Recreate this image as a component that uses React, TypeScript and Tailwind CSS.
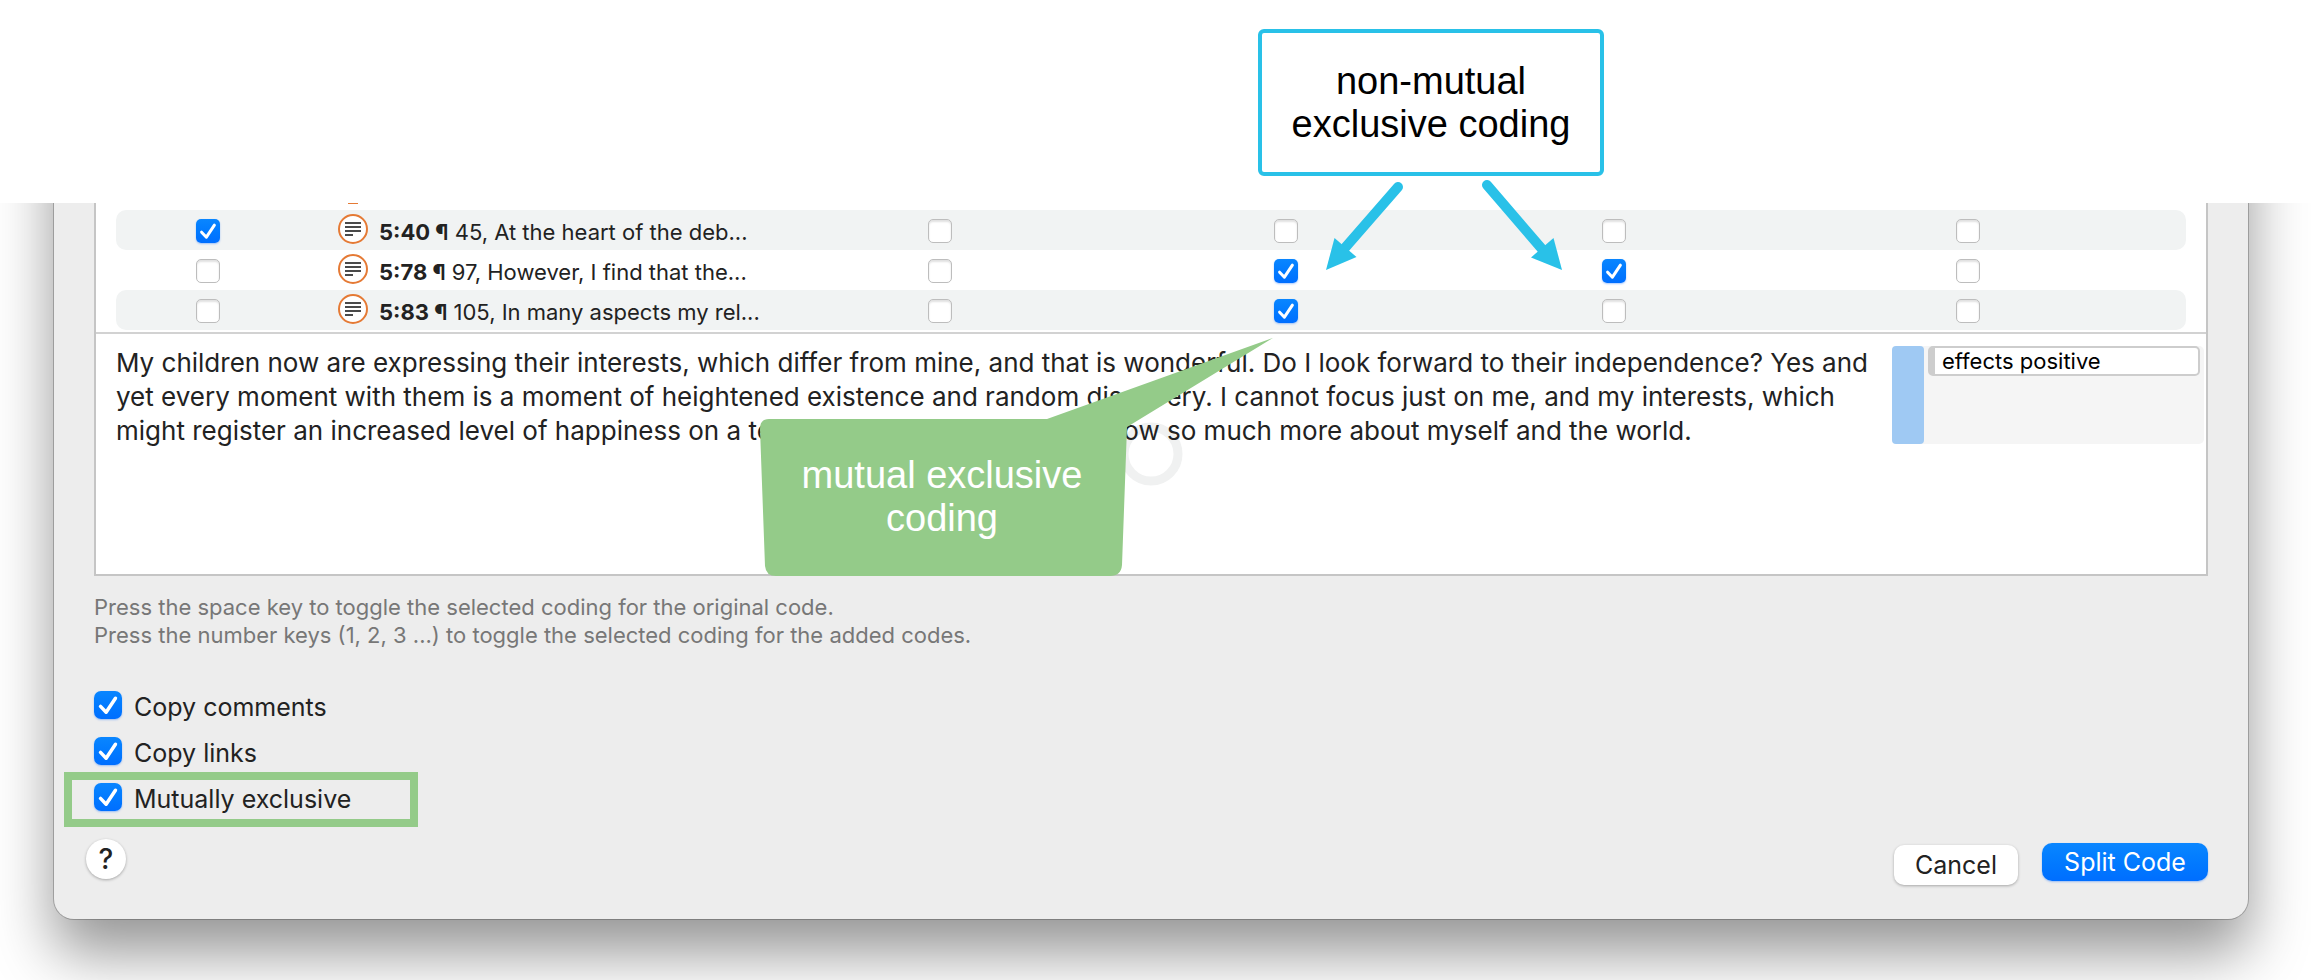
import { useState } from "react";

function CheckBox({
  label,
  id,
  large = false,
  initial = false,
}: {
  label?: string;
  id?: string;
  large?: boolean;
  initial?: boolean;
}) {
  const [on, setOn] = useState(initial);
  const size = large ? "size-7 rounded-[7px]" : "size-6 rounded-[5px]";
  const skin = on
    ? "bg-linear-to-b from-[#0a86ff] to-[#006eff] shadow-[0_1px_2px_rgba(0,100,255,0.35)]"
    : "border border-[#bdbdbd] bg-white shadow-[inset_0_2px_2px_rgba(0,0,0,0.12)]";
  return (
    <span className="inline-grid shrink-0 place-items-center align-middle">
      <input
        id={id}
        type="checkbox"
        aria-label={label}
        checked={on}
        onChange={() => setOn(!on)}
        className={`col-start-1 row-start-1 m-0 appearance-none ${size} ${skin}`}
      />
      {on && (
        <svg
          viewBox="0 0 24 24"
          className={`pointer-events-none col-start-1 row-start-1 ${large ? "size-7" : "size-6"}`}
          fill="none"
          stroke="#fff"
          strokeWidth="3"
          strokeLinecap="round"
          strokeLinejoin="round"
        >
          <path d="M5.6 13.2 10.4 18.2 18.4 6.2" />
        </svg>
      )}
    </span>
  );
}

function QuoteIcon() {
  return (
    <svg viewBox="0 0 30 30" className="size-[30px] shrink-0">
      <circle cx="15" cy="15" r="14" fill="#fff" stroke="#e57a35" strokeWidth="2" />
      <path d="M7 9h16M7 13h16M7 17h16M7 21h8" stroke="#4a4a4a" strokeWidth="2" />
    </svg>
  );
}

const rows = [
  { id: "5:40", text: "45, At the heart of the deb...", marks: [true, false, false, false, false] },
  { id: "5:78", text: "97, However, I find that the...", marks: [false, false, true, true, false] },
  { id: "5:83", text: "105, In many aspects my rel...", marks: [false, false, true, false, false] },
];

function QuotationTable() {
  return (
    <div className="px-5 pb-0.5">
      <table className="w-full table-fixed border-separate border-spacing-0">
        <colgroup>
          <col className="w-[183px]" />
          <col className="w-[487px]" />
          <col className="w-[308px]" />
          <col className="w-[384px]" />
          <col className="w-[272px]" />
          <col className="w-[436px]" />
        </colgroup>
        <tbody>
          <tr>
            <td className="p-0" />
            <td className="p-0 pl-[39px]" colSpan={5}>
              <svg viewBox="0 0 30 7" className="block h-[7px] w-[30px]">
                <path d="M10 0H20V1H10Z" fill="#e57a35" />
              </svg>
            </td>
          </tr>
          {rows.map((row) => (
            <tr key={row.id} className="h-10 even:[&>td]:bg-[#f1f3f3]">
              <td className="rounded-l-[10px] p-0 text-center">
                <CheckBox label={`${row.id} original code`} initial={row.marks[0]} />
              </td>
              <td className="p-0 pl-[39px]">
                <div className="flex h-10 items-start gap-[11px] pt-1">
                  <QuoteIcon />
                  <span className="pt-1 text-[22px] leading-7 whitespace-nowrap">
                    <b className="font-bold">{row.id} ¶</b> {row.text}
                  </span>
                </div>
              </td>
              {row.marks.slice(1).map((mark, i) => (
                <td key={i} className={`p-0 text-center ${i === 3 ? "rounded-r-[10px]" : ""}`}>
                  <CheckBox label={`${row.id} code ${i + 1}`} initial={mark} />
                </td>
              ))}
            </tr>
          ))}
        </tbody>
      </table>
    </div>
  );
}

function Preview() {
  return (
    <div className="flex h-[242px] justify-between border-t-2 border-[#d2d2d2] pt-3 pr-0.5 pl-5">
      <div className="relative">
        <svg viewBox="0 0 64 64" className="absolute top-[76px] left-[1003px] size-16">
          <circle cx="32" cy="32" r="27" fill="none" stroke="#f0f1f1" strokeWidth="9" />
        </svg>
        <p className="relative text-[26px] leading-[34px] whitespace-nowrap">
          My children now are expressing their interests, which differ from mine, and that is wonderful. Do I look
          forward to their independence? Yes and
          <br />
          yet every moment with them is a moment of heightened existence and random discovery. I cannot focus just on
          me, and my interests, which
          <br />
          might register an increased level of happiness on a test. And because of them I know so much more about
          myself and the world.
        </p>
      </div>
      <div className="flex h-[98px] w-[312px] shrink-0 rounded-[5px] bg-[#f5f5f5]">
        <div className="w-8 shrink-0 rounded-[4px] bg-[#9fc9f3]" />
        <div className="mx-1 h-[30px] grow rounded-[5px] border-2 border-l-[7px] border-[#cdcdcd] bg-white pl-[7px] text-[22px] leading-[26px] text-black">
          effects positive
        </div>
      </div>
    </div>
  );
}

const options = [
  { id: "comments", label: "Copy comments" },
  { id: "links", label: "Copy links" },
  { id: "exclusive", label: "Mutually exclusive" },
];

function Annotations() {
  return (
    <>
      <div className="absolute top-[29px] left-[1258px] flex h-[147px] w-[346px] items-center justify-center rounded-md border-4 border-[#29c1e8] bg-white text-center font-['Liberation_Sans',Arial,sans-serif] text-[38px] leading-[43px] text-black">
        non-mutual
        <br />
        exclusive coding
      </div>
      <svg viewBox="0 0 250 100" className="pointer-events-none absolute top-[176px] left-[1320px] h-[100px] w-[250px]">
        <g fill="#29c1e8" stroke="#29c1e8">
          <path d="M78 11 24 73" strokeWidth="10" strokeLinecap="round" />
          <path d="M6 94 14.500 62 36.500 81Z" stroke="none" />
          <path d="M167 9 222 73" strokeWidth="10" strokeLinecap="round" />
          <path d="M242 94 233.500 62 211 81.500Z" stroke="none" />
        </g>
      </svg>
      <div className="pointer-events-none absolute top-[338px] left-[760px] h-[238px] w-[513px]">
        <svg viewBox="0 0 513 238" className="absolute inset-0">
          <path
            d="M9 81H287L513 0 367 89 362 227Q361 238 350 238H16Q6 238 5 228L0 91Q0 81 9 81Z"
            fill="#94cb89"
          />
        </svg>
        <p className="relative w-[364px] pt-[116px] text-center font-['Liberation_Sans',Arial,sans-serif] text-[38px] leading-[43px] text-white">
          mutual exclusive
          <br />
          coding
        </p>
      </div>
      <div className="pointer-events-none absolute top-[772px] left-[64px] h-[55px] w-[354px] border-8 border-[#94cb89]" />
    </>
  );
}

export default function App() {
  return (
    <div className="relative min-h-screen overflow-hidden bg-white pt-[203px] font-[Inter,sans-serif] text-[#222]">
      <div className="overflow-hidden pr-[63px] pb-[62px] pl-[54px]">
        <main className="-mt-24 rounded-b-[20px] bg-[#ededed] px-10 pt-24 pb-[34px] shadow-[0_0_0_1px_rgba(0,0,0,0.22),0_34px_60px_rgba(0,0,0,0.42)]">
          <section className="border-2 border-t-0 border-[#c5c5c5] bg-white">
            <QuotationTable />
            <Preview />
          </section>
          <p className="pt-[17px] text-[22px] leading-7 text-[#777]">
            Press the space key to toggle the selected coding for the original code.
            <br />
            Press the number keys (1, 2, 3 ...) to toggle the selected coding for the added codes.
          </p>
          <div className="flex flex-col gap-3.5 pt-[42px]">
            {options.map((o) => (
              <div key={o.id} className="flex h-8 items-start gap-3">
                <CheckBox id={o.id} large initial />
                <label htmlFor={o.id} className="text-[25px] leading-8">
                  {o.label}
                </label>
              </div>
            ))}
          </div>
          <div className="-ml-2 flex items-start pt-6">
            <button
              aria-label="Help"
              className="size-10 rounded-full bg-white text-[28px] leading-10 font-medium shadow-[0_1px_3px_rgba(0,0,0,0.3)]"
            >
              ?
            </button>
            <button className="mt-1.5 ml-auto h-10 w-[124px] rounded-[10px] bg-white text-[25px] leading-10 shadow-[0_1px_3px_rgba(0,0,0,0.3)]">
              Cancel
            </button>
            <button className="mt-1 ml-6 h-[38px] w-[166px] rounded-[10px] bg-linear-to-b from-[#0a86ff] to-[#006eff] text-[25px] leading-9 text-white shadow-[0_1px_2px_rgba(0,100,255,0.35)]">
              Split Code
            </button>
          </div>
        </main>
      </div>
      <Annotations />
    </div>
  );
}
